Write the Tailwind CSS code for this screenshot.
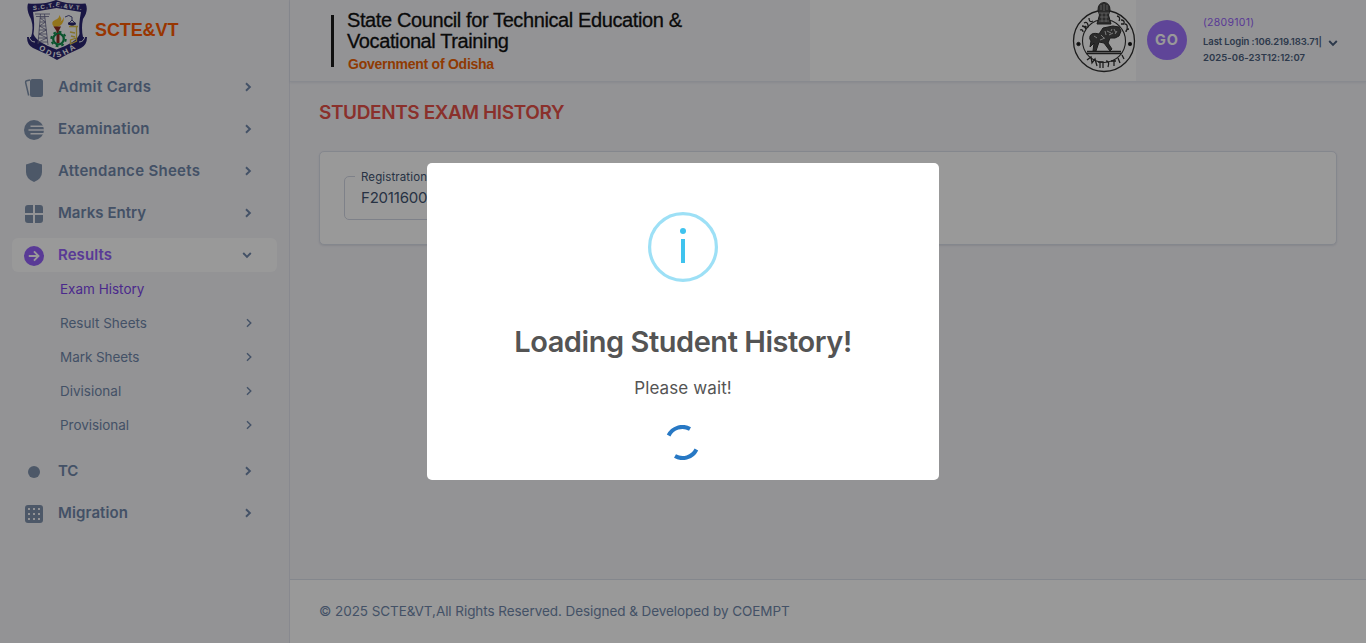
<!DOCTYPE html>
<html lang="en">
<head>
<meta charset="utf-8">
<title>Students Exam History</title>
<script src="https://cdn.jsdelivr.net/npm/@tailwindcss/browser@4"></script>
</head>
<body class="h-[643px] overflow-hidden bg-[#f5f5f9] font-['Inter',sans-serif] text-[#7188ab]">
<svg class="hidden">
  <symbol id="chev" viewBox="0 0 10 10"><path d="M3 1.2 6.9 5 3 8.800" fill="none" stroke="currentColor" stroke-width="1.9"/></symbol>
  <symbol id="chevthin" viewBox="0 0 10 10"><path d="M3 1.200 6.800 5 3 8.800" fill="none" stroke="currentColor" stroke-width="1.4"/></symbol>
</svg>
<div class="flex h-full">
  <aside class="flex w-[290px] shrink-0 flex-col border-r border-[#e3e5ee] px-3">
    <div class="flex h-[70px] items-start pl-[14px]">
      <svg class="h-[60px] w-[62px] shrink-0" viewBox="0 0 62 60">
        <path d="M2 3.500Q17 5 30 0Q44 5 59.500 3.500Q63 10 57 19Q55 28 57 37L61 37Q61 45 55 48Q43 53 31 60Q19 53 7 48Q1 45 1 37L5 37Q8 28 5 19Q0 10 2 3.500Z" fill="#2b2672"/>
        <path d="M7 12Q19 10 30.500 8Q43 10 55 12Q52.500 24 53.500 34Q51 42 30.500 49.500Q10 42 7.500 34Q9 24 7 12Z" fill="#f8f8fa"/>
        <path d="M3 36Q4 42 9 42M59 36Q58 42 53 42" stroke="#f8f8fa" fill="none"/>
        <g fill="none" stroke="#66668c" stroke-width=".8"><path d="M14.500 14 12 44M18.500 14 22 45M14 18H19M14 22H19.500M13 26H20M13 30H20M13 34H21M12 38H21M12 42H22M14 18l5.500 4-6 4 7 4-7.500 4 8 4-8.500 4M9 14H24M10 16.500H23"/></g>
        <path d="M28 27Q24 22 29 20Q34 18 33 15Q37 19 34 22Q37 20 38 17Q38 25 31 27Z" fill="#f4c12f"/>
        <path d="M27.500 26.500H35L32.800 31V43H30.500V31Z" fill="#8b2b24"/>
        <circle cx="32.500" cy="39" r="5.300" fill="none" stroke="#118a4c" stroke-width="2.300"/>
        <circle cx="32.500" cy="39" r="7.200" fill="none" stroke="#118a4c" stroke-width="2" stroke-dasharray="2.700 2.955"/>
        <path d="M31.500 34h2v9h-2z" fill="#8b2b24"/>
        <path d="M39 17Q43 14 46 17V20L50 24Q47 27 42 24L46 20" fill="none" stroke="#4b4b85"/>
        <path d="M42 22.500h7.500q0 3-3.700 3t-3.800-3" fill="#2b2672"/>
        <path d="M43 26.500h9M50.500 27v14l-6 3v-4l6-2M49 33l-5-1M49 37l-4-1" fill="none" stroke="#dcc04a" stroke-width="1.300"/>
        <path id="scteTop" d="M5 10Q18 9.500 30.500 6.300Q44 9.500 58 10" fill="none"/>
        <path id="scteBot" d="M9.500 46Q22 57.500 31 57.500Q42 55 54 45" fill="none"/>
        <g fill="#fff" font-family="Liberation Sans" font-weight="700"><text font-size="6"><textPath href="#scteTop" textLength="49" startOffset="2">S.C.T.E.&amp;V.T.</textPath></text><text font-size="7.500"><textPath href="#scteBot" textLength="42" startOffset="4">ODISHA</textPath></text></g>
      </svg>
      <span class="ml-[7px] mt-[18px] font-['Liberation_Sans',sans-serif] text-[18px] font-bold leading-6 tracking-[-0.1px] text-[#fe5a02]">SCTE&amp;VT</span>
    </div>
    <nav class="flex flex-col gap-2 text-[15px] font-semibold leading-[34px]">
      <a class="flex h-[34px] items-center pl-[11px] pr-[24px]">
        <svg class="mt-[2px] h-[22px] w-[22px] text-[#8093ad]" viewBox="0 0 22 22" fill="currentColor"><rect x="7" y="2" width="13" height="18" rx="2.500"/><path d="M7 3 3.700 3.800q-1.300.3-1.100 1.500L5.700 18.500" fill="none" stroke="currentColor" stroke-width="1.500"/></svg>
        <span class="ml-[13px] flex-1 tracking-[0.35px]">Admit Cards</span><svg class="h-[10px] w-[10px]"><use href="#chev"/></svg>
      </a>
      <a class="flex h-[34px] items-center pl-[11px] pr-[24px]">
        <svg class="mt-[2px] h-[22px] w-[22px] text-[#8093ad]" viewBox="0 0 22 22"><circle cx="11" cy="11" r="10" fill="currentColor"/><path d="M7.500 7.200H22M5.500 11H22M7.500 14.800H22" stroke="#f5f5f9" stroke-width="1.600"/></svg>
        <span class="ml-[13px] flex-1 tracking-[0.25px]">Examination</span><svg class="h-[10px] w-[10px]"><use href="#chev"/></svg>
      </a>
      <a class="flex h-[34px] items-center pl-[11px] pr-[24px]">
        <svg class="mt-[2px] h-[22px] w-[22px] text-[#8093ad]" viewBox="0 0 22 22" fill="currentColor"><path d="M11 1 19 3.600V11Q19 18 11 21Q3 18 3 11V3.600Z"/></svg>
        <span class="ml-[13px] flex-1 tracking-[0.3px]">Attendance Sheets</span><svg class="h-[10px] w-[10px]"><use href="#chev"/></svg>
      </a>
      <a class="flex h-[34px] items-center pl-[11px] pr-[24px]">
        <svg class="mt-[2px] h-[22px] w-[22px] text-[#8093ad]" viewBox="0 0 22 22" fill="currentColor"><path d="M10 2v8H2V5q0-3 3-3ZM12 2h5q3 0 3 3v5h-8ZM2 12h8v8H5q-3 0-3-3ZM12 12h8v5q0 3-3 3h-5Z"/></svg>
        <span class="ml-[13px] flex-1 tracking-[0.03px]">Marks Entry</span><svg class="h-[10px] w-[10px]"><use href="#chev"/></svg>
      </a>
      <div>
        <a class="flex h-[34px] items-center rounded-[6px] bg-white pl-[11px] pr-[25px] text-[#9562fa]">
          <svg class="mt-[2px] h-[22px] w-[22px]" viewBox="0 0 22 22"><circle cx="11" cy="11" r="10" fill="currentColor"/><path d="M5.800 11H15M11 6.300 15.500 11 11 15.700" fill="none" stroke="#fff" stroke-width="1.900"/></svg>
          <span class="ml-[13px] flex-1 tracking-[0.08px]">Results</span><svg class="h-[10px] w-[10px] rotate-90 text-[#7188ab]"><use href="#chev"/></svg>
        </a>
        <div class="flex flex-col pl-12 pr-[23px] text-[13.5px] font-normal">
          <a class="text-[#7d45ea]">Exam History</a>
          <a class="flex items-center justify-between">Result Sheets<svg class="h-[10px] w-[10px]"><use href="#chevthin"/></svg></a>
          <a class="flex items-center justify-between tracking-[-0.06px]">Mark Sheets<svg class="h-[10px] w-[10px]"><use href="#chevthin"/></svg></a>
          <a class="flex items-center justify-between">Divisional<svg class="h-[10px] w-[10px]"><use href="#chevthin"/></svg></a>
          <a class="flex items-center justify-between tracking-[-0.05px]">Provisional<svg class="h-[10px] w-[10px]"><use href="#chevthin"/></svg></a>
        </div>
      </div>
      <a class="mt-1 flex h-[34px] items-center pl-[11px] pr-[24px]">
        <svg class="mt-[2px] h-[22px] w-[22px] text-[#8093ad]" viewBox="0 0 22 22" fill="currentColor"><circle cx="11" cy="11" r="6"/></svg>
        <span class="ml-[13px] flex-1 tracking-[-0.1px]">TC</span><svg class="h-[10px] w-[10px]"><use href="#chev"/></svg>
      </a>
      <a class="flex h-[34px] items-center pl-[11px] pr-[24px]">
        <svg class="mt-[2px] h-[22px] w-[22px] text-[#8093ad]" viewBox="0 0 22 22"><rect x="2" y="2" width="18" height="18" rx="3" fill="currentColor"/><path d="M5 6h2M10 6h2M15 6h2M5 11h2M10 11h2M15 11h2M5 16h2M10 16h2M15 16h2" stroke="#f5f5f9" stroke-width="2"/></svg>
        <span class="ml-[13px] flex-1 tracking-[0.11px]">Migration</span><svg class="h-[10px] w-[10px]"><use href="#chev"/></svg>
      </a>
    </nav>
  </aside>
  <div class="flex min-w-0 flex-1 flex-col">
    <header class="flex h-[82px] shrink-0 border-b border-[#e3e6ee] shadow-[0_1px_2px_rgba(40,50,90,0.08)]">
      <div class="flex w-[520px] pl-[41px] pt-[15px] font-['Liberation_Sans',sans-serif]">
        <div class="h-[52px] w-[3px] bg-[#1c1c1c]"></div>
        <div class="-mt-[5px] ml-[13px] whitespace-nowrap text-[20px] leading-[21px] tracking-[-0.39px] text-[#111] [-webkit-text-stroke:0.3px_#111]">
          <p>State Council for Technical Education &amp;</p><p>Vocational Training</p>
          <p class="ml-px mt-px text-[14px] font-bold leading-[22px] tracking-[-0.25px] text-[#ef6204] [-webkit-text-stroke:0]">Government of Odisha</p>
        </div>
      </div>
      <div class="flex w-[326px] justify-end bg-white">
        <svg class="h-[76px] w-[64px]" viewBox="0 0 64 76" fill="none" stroke="#303030">
          <circle cx="32" cy="41" r="30.500" stroke-width="1.300"/><circle cx="32" cy="41" r="21.500" stroke-width="1.100"/>
          <path d="M26 10Q26 3 32 2.500Q38 3 38 10L36.500 15L39 24H25L27.500 15Z" fill="#4a4a4a"/>
          <path d="M29 5v5M32 4v7M35 5v5M27 13h10M28 17h8M27 21h10M30 13v9M34 13v9" stroke="#aaa" stroke-width=".8"/>
          <path d="M15 51.500H49M14 53.500H50" stroke-width="1.400"/>
          <path d="M18 36Q20 32 27 34L31 28L36 27L41 26L47 27L49 31L47 36L43 38L38 38L36 43L40 49L38 51L32 43L27 42L24 51H21L22 43L18 47L19 41Q17 39 18 36Z" fill="#484848"/>
          <path d="M22 36l3 2M29 35l3 3M35 31l4 2M42 29l2 4M28 40l5-2M37 35l4-2M33 31l1 4M40 29l-1 2M45 31l-2 3" stroke="#ccc"/>
          <circle cx="6.500" cy="44" r="1.700" fill="#111"/><circle cx="58" cy="44" r="1.700" fill="#111"/>
          <path d="M8 30q3-1 3 2M10 26q3 0 4 3M12 23q3-2 4 2t-3 1M17 18q0 5 4 3M45 16q4 1 2 5M49 20q4 0 3 4l-3 0M53 24q3 0 2 5M57 29q-3 0-3 3M15 60l4-3 1 6 3-4 2 7M26 62h5v6M28 62v6M34 61q4 0 2 6M39 61h5M42 60v6M46 58l2 5M50 55l2 4" stroke-width="1.300"/>
        </svg>
      </div>
      <div class="flex flex-1 pl-[11px] pt-[13px]">
        <div class="mt-[7px] flex h-10 w-10 items-center justify-center rounded-full bg-[#9e74fd] text-[14.5px] font-bold tracking-[0.9px] text-white">GO</div>
        <div class="ml-4 mt-px whitespace-nowrap text-[9.5px] font-semibold leading-4 text-[#4b5f7d]">
          <p class="mb-px text-[10.5px] font-normal leading-[18px] tracking-[0.27px] text-[#9562fa]">(2809101)</p>
          <p class="flex items-center leading-[18px] tracking-[-0.09px]">Last Login :106.219.183.71|<svg class="ml-[6px] mt-px h-[10px] w-[10px] rotate-90"><use href="#chev"/></svg></p>
          <p class="-mt-px tracking-[0.07px]">2025-06-23T12:12:07</p>
        </div>
      </div>
    </header>
    <main class="flex-1 px-[29px] pt-[18px]">
      <h1 class="text-[19px] font-semibold leading-[26px] tracking-[-0.39px] text-[#e65048]">STUDENTS EXAM HISTORY</h1>
      <section class="mt-[25px] h-[94px] rounded-[5px] border border-[#dde1ec] bg-white px-6 pt-4 shadow-[0_1px_2px_rgba(40,50,90,0.1)]">
        <fieldset class="h-[52px] w-[320px] rounded-[5px] border border-[#d3d7e4] px-[10px] text-[#425471]">
          <legend class="px-[6px] text-[11.5px] leading-[17px] tracking-[0.12px]"><span class="block h-[17px] pt-px">Registration No</span></legend>
          <div class="pl-[6px] text-[15px] leading-[25px] tracking-[-0.2px]">F2011600100</div>
        </fieldset>
      </section>
    </main>
    <footer class="h-[64px] shrink-0 border-t border-[#dde1ec] bg-white pl-[29px] text-[13.5px] leading-[63px] tracking-[-0.06px]">© 2025 SCTE&amp;VT,All Rights Reserved. Designed &amp; Developed by COEMPT</footer>
  </div>
</div>
<div class="fixed inset-0 flex items-center justify-center bg-black/40">
  <div role="dialog" class="flex h-[317px] w-[512px] flex-col items-center rounded-[5px] bg-white pt-[49px] text-[#545454]">
    <svg class="h-[70px] w-[70px]" viewBox="0 0 70 70"><circle cx="35" cy="35" r="33.400" fill="none" stroke="#9de0f6" stroke-width="3.200"/><circle cx="35" cy="19" r="3" fill="#3fc3ee"/><path d="M33 27h4v24h-4z" fill="#3fc3ee"/></svg>
    <h2 class="mt-[40px] text-[29px] font-semibold leading-10 tracking-[-0.45px]">Loading Student History!</h2>
    <p class="mt-[14px] text-[17px] leading-6 tracking-[0.11px]">Please wait!</p>
    <svg class="mr-px mt-[25px] h-[35px] w-[35px]" viewBox="-17.500 -17.500 35 35" fill="none" stroke="#2778c4" stroke-width="4"><path d="M-13.900-7A15.500 15.500 0 0 1 7.500-13.600M13.900 7A15.500 15.500 0 0 1-7.500 13.600"/></svg>
  </div>
</div>
</body>
</html>
